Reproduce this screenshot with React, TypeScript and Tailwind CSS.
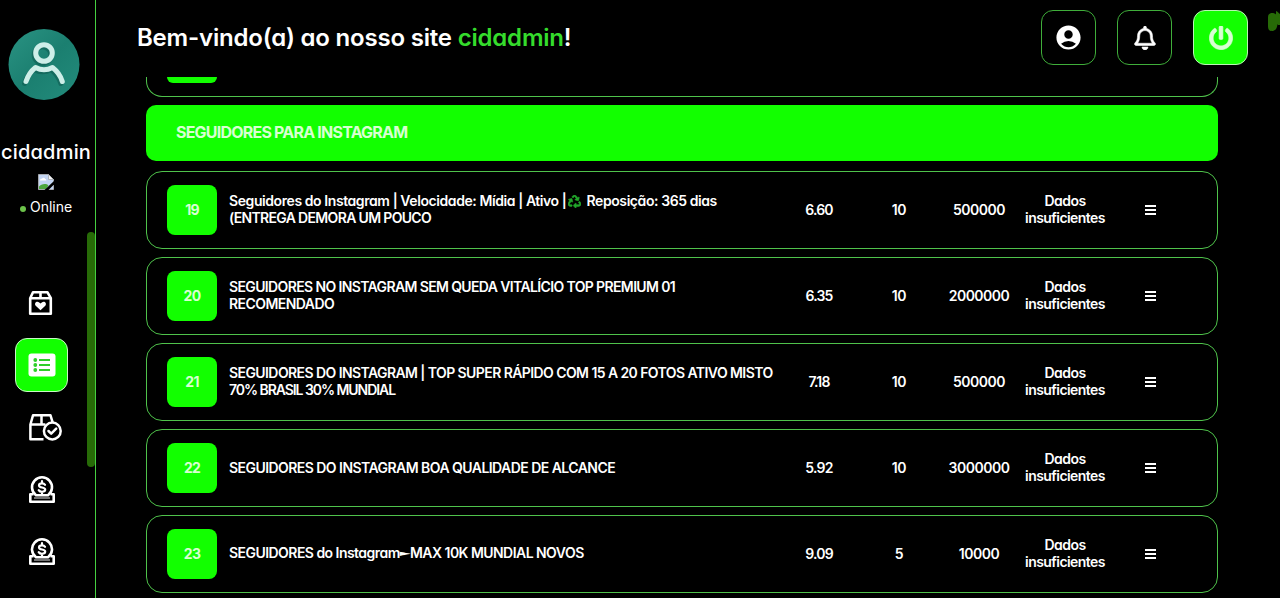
import React from 'react';
import { FaPowerOff, FaRegBell, FaRecycle } from 'react-icons/fa';
import { MdAccountCircle } from 'react-icons/md';

type Line = { text: string; tracking: string; node?: React.ReactNode };

type Service = {
  id: number;
  lines: Line[];
  price: string;
  min: string;
  max: string;
};

const services: Service[] = [
  {
    id: 19,
    lines: [
      {
        text: 'Seguidores do Instagram',
        tracking: 'tracking-[-0.42px]',
        node: (
          <>
            Seguidores do Instagram | Velocidade: Mídia | Ativo |
            <FaRecycle className="mx-[2px] inline h-[13px] w-[13px] stroke-[#22a52b] stroke-[24px] align-[-2px] text-[#22a52b]" /> Reposição: 365 dias
          </>
        ),
      },
      { text: '(ENTREGA DEMORA UM POUCO', tracking: 'tracking-[-0.67px]' },
    ],
    price: '6.60',
    min: '10',
    max: '500000',
  },
  {
    id: 20,
    lines: [
      { text: 'SEGUIDORES NO INSTAGRAM SEM QUEDA VITALÍCIO TOP PREMIUM 01', tracking: 'tracking-[-0.63px]' },
      { text: 'RECOMENDADO', tracking: 'tracking-[-0.55px]' },
    ],
    price: '6.35',
    min: '10',
    max: '2000000',
  },
  {
    id: 21,
    lines: [
      { text: 'SEGUIDORES DO INSTAGRAM | TOP SUPER RÁPIDO COM 15 A 20 FOTOS ATIVO MISTO', tracking: 'tracking-[-0.58px]' },
      { text: '70% BRASIL 30% MUNDIAL', tracking: 'tracking-[-1.05px]' },
    ],
    price: '7.18',
    min: '10',
    max: '500000',
  },
  {
    id: 22,
    lines: [{ text: 'SEGUIDORES DO INSTAGRAM BOA QUALIDADE DE ALCANCE', tracking: 'tracking-[-0.55px]' }],
    price: '5.92',
    min: '10',
    max: '3000000',
  },
  {
    id: 23,
    lines: [
      {
        text: 'SEGUIDORES do Instagram',
        tracking: 'tracking-[-0.54px]',
        node: (
          <>
            SEGUIDORES do Instagram
            <span className="inline-block scale-y-60 font-['DejaVu_Sans']">►</span>
            MAX 10K MUNDIAL NOVOS
          </>
        ),
      },
    ],
    price: '9.09',
    min: '5',
    max: '10000',
  },
];

const Avatar = () => (
  <svg className="h-[72px] w-[72px]" viewBox="0 0 72 72" fill="none">
    <defs>
      <linearGradient id="avatarBg" x1="0" y1="0" x2="1" y2="1">
        <stop offset="0" stopColor="#2a9383" />
        <stop offset="0.5" stopColor="#1b7f70" />
        <stop offset="1" stopColor="#238c7c" />
      </linearGradient>
    </defs>
    <circle cx="36" cy="36.5" r="35.5" fill="url(#avatarBg)" />
    <g strokeLinecap="round" strokeLinejoin="round">
      <g stroke="#0f5d52" strokeWidth="5" opacity="0.6" transform="translate(-1.5 2)">
        <circle cx="36" cy="25" r="8.3" />
        <path d="M18 53.500c2-6 5-10.500 9.500-14 5.500 3 11.500 3 17 0C49 43 52.500 47.500 54.300 53.500" />
      </g>
      <g stroke="#cdeee8" strokeWidth="5">
        <circle cx="36" cy="25" r="8.300" />
        <path d="M18 53.500c2-6 5-10.500 9.500-14 5.500 3 11.500 3 17 0C49 43 52.500 47.500 54.300 53.500" />
      </g>
    </g>
  </svg>
);

const BrokenImage = () => (
  <svg className="h-4 w-4" viewBox="0 0 16 16">
    <path d="M0.500 0.500h10l5 5v10H0.500z" fill="#c3d5f3" stroke="#a5a8ad" />
    <path d="M10.500 0.500v5h5z" fill="#f5f5f5" stroke="#a5a8ad" strokeWidth="0.800" />
    <path d="M2 6.500c0-1.500 1-2 2-1.800C4.500 3.200 7 3.500 7 5c1 0 1.500.7 1.300 1.500z" fill="#fff" />
    <path d="M1 15v-2.500C3 10 8 9 10.500 11.500L8 15z" fill="#4ca63c" />
    <path d="M6.500 16L16 7v3.500L10.500 16z" fill="#000" />
  </svg>
);

const BoxHeart = () => (
  <svg className="h-6 w-[25px]" viewBox="0 0 25 24" fill="none" stroke="#fff" strokeWidth="2.600" strokeLinejoin="round">
    <path d="M2.200 7.200L5 1.300h14.500l3.300 5.900v15.500H2.200zM2.200 7.200h20.600M12.500 1.300v5.900" />
    <path d="M12.500 19.300l-4.800-4.600c-2-2.500 1-5.300 3.500-3.300l1.300 1.100 1.300-1.100c2.500-2 5.500.8 3.500 3.300z" fill="#fff" stroke="none" />
  </svg>
);

const ListBox = () => (
  <svg className="h-6 w-7" viewBox="0 0 28 24">
    <rect x="0.500" y="0.500" width="27" height="23" rx="3" fill="#fff" />
    <g fill="#2fce2a">
      <circle cx="7.300" cy="7" r="1.900" />
      <circle cx="7.300" cy="12" r="1.900" />
      <circle cx="7.300" cy="17" r="1.900" />
      <path d="M11 6h11v2H11zM11 11h11v2H11zM11 16h11v2H11z" />
    </g>
  </svg>
);

const BoxCheck = () => (
  <svg className="h-[27px] w-[33px]" viewBox="0 0 33 27" fill="none" stroke="#fff" strokeWidth="2.500" strokeLinejoin="round">
    <path d="M14.500 25.300H1.400V10.500L4 1.300h17.500l2.300 7.500M1.400 10.500h15M12.500 1.300v9.200" />
    <circle cx="23.300" cy="17" r="8.400" />
    <path d="M19.500 17l2.700 2.700 5-5" strokeLinecap="round" />
  </svg>
);

const CoinSlot = () => (
  <svg className="h-[27px] w-[26px]" viewBox="0 0 26 27" fill="none" stroke="#fff" strokeWidth="2.600" strokeLinejoin="round">
    <path d="M4.500 18.200H1.300v7.500h23.400v-7.500h-3.200" />
    <path d="M5 22h16" stroke="#999" strokeWidth="1.500" />
    <path d="M7 19.300a10 10 0 1 1 12 0z" />
    <path d="M16 8.800c-.6-1-1.700-1.500-3-1.500-1.800 0-3 .8-3 2.100 0 3 6.200 1.200 6.200 4.200 0 1.400-1.300 2.200-3.200 2.200-1.500 0-2.700-.6-3.300-1.700M13 5.200v2M13 15.800v2" strokeWidth="2.200" strokeLinecap="round" />
  </svg>
);

const Sidebar = () => (
  <aside className="flex h-full w-24 shrink-0">
    <div className="flex w-[87px] shrink-0 flex-col">
      <div className="mt-7 flex h-[73px] pl-2">
        <Avatar />
      </div>
      <div className="mt-[37px] h-7 whitespace-nowrap pl-px text-[20px] font-medium leading-7 tracking-[0.2px]">cidadmin</div>
      <div className="mt-2 flex h-[17px] pl-[38px]">
        <BrokenImage />
      </div>
      <div className="mt-1.5 flex h-5 items-center pl-5 text-[14px] leading-5">
        <span className="mr-1 mt-1 h-1.5 w-1.5 shrink-0 rounded-full bg-[#6cc24a]"></span>
        <span>Online</span>
      </div>
      {/* Menu */}
      <nav className="mt-[59px] flex flex-col gap-2 pl-[15px]">
        <a className="flex h-[54px] w-[53px] items-center pl-[13px]"><BoxHeart /></a>
        <a className="flex h-[54px] w-[53px] items-center justify-center rounded-xl border border-[#c9f7c6] bg-[#12ff00]">
          <ListBox />
        </a>
        <a className="flex h-[54px] w-[53px] items-center pl-[14px]"><BoxCheck /></a>
        <a className="flex h-[54px] w-[53px] items-center pl-[14px]"><CoinSlot /></a>
        <a className="flex h-[54px] w-[53px] items-center pl-[14px]"><CoinSlot /></a>
      </nav>
    </div>
    {/* Scroll thumb */}
    <div className="mt-[232px] h-[235px] w-2 shrink-0 rounded-full bg-[#276b07]"></div>
    <div className="w-px shrink-0 bg-[#45d040]"></div>
  </aside>
);

const ServiceRow = ({ service }: { service: Service }) => (
  <div className="grid h-[78px] shrink-0 grid-cols-[62px_550px_80px_80px_80px_92px_80px] items-center rounded-2xl border border-[#4fc24b] pl-5 text-center text-[14px] font-semibold leading-[17px]">
    <div className="flex h-[50px] w-[50px] items-center justify-center rounded-lg bg-[#12ff00] pb-0.5 font-bold tracking-[-0.7px] text-[#d8ffd2]">
      {service.id}
    </div>
    <div className="pb-0.5 text-left">
      {service.lines.map((line) => (
        <div key={line.text} className={`whitespace-nowrap ${line.tracking}`}>{line.node ?? line.text}</div>
      ))}
    </div>
    <div className="pb-0.5 tracking-[-0.8px]">{service.price}</div>
    <div className="pb-0.5 tracking-[-0.4px]">{service.min}</div>
    <div className="pb-0.5 tracking-[-0.5px]">{service.max}</div>
    <div className="pb-0.5 tracking-[-0.55px]">Dados<br />insuficientes</div>
    <div className="flex flex-col items-center gap-0.5 pr-px">
      <span className="h-0.5 w-[11px] bg-white"></span>
      <span className="h-0.5 w-[11px] bg-white"></span>
      <span className="h-0.5 w-[11px] bg-white"></span>
    </div>
  </div>
);

const Header = () => (
  <header className="flex h-[77px] shrink-0 items-start pl-[41px]">
    <h1 className="mt-[22px] grow whitespace-nowrap text-[24px] font-semibold leading-8 tracking-[-0.2px]">
      Bem-vindo(a) ao nosso site <span className="text-[#35dc2c]">cidadmin</span>!
    </h1>
    <div className="mt-2.5 flex gap-[21px]">
      <button className="flex h-[55px] w-[55px] items-center justify-center rounded-xl border border-[#3fae3a]">
        <MdAccountCircle className="h-[29px] w-[29px]" />
      </button>
      <button className="flex h-[55px] w-[55px] items-center justify-center rounded-xl border border-[#3fae3a]">
        <FaRegBell className="h-6 w-6 stroke-white stroke-[12px]" />
      </button>
      <button className="flex h-[55px] w-[55px] items-center justify-center rounded-xl border border-[#b9f5b4] bg-[#12ff00] text-[#d8ffd2]">
        <FaPowerOff className="h-6 w-6 stroke-[#d8ffd2] stroke-[14px]" />
      </button>
    </div>
    <svg className="ml-5 mt-[11px] h-5 w-3" viewBox="0 0 12 20">
      <path d="M0 6c0-3 2-4 4-4 2 0 3 .5 4 1.500V0c1.500.5 2.500 2 4 3v11c-1 0-2 .5-2.500-1C9 18 7 20 4 20c-3 0-4-2-4-5z" fill="#276b07" />
    </svg>
  </header>
);

const App = () => {
  return (
    <div className="flex h-[598px] w-[1280px] overflow-hidden bg-black font-[Inter,sans-serif] text-white [font-feature-settings:'cv11']">
      <Sidebar />
      <main className="flex min-w-0 grow flex-col">
        <Header />
        <section className="flex min-h-0 w-[1122px] grow flex-col overflow-hidden pl-[50px]">
          {/* Tail of the previous row, scrolled under the header */}
          <div className="h-5 shrink-0 rounded-b-2xl border border-t-0 border-[#4fc24b] pl-5">
            <div className="h-1.5 w-[50px] rounded-b-lg bg-[#12ff00]"></div>
          </div>
          <div className="mt-2 flex h-14 shrink-0 items-center rounded-[10px] bg-[#12ff00] pl-[30px] text-[16px] font-bold text-[#d8ffd2]">
            <span className="pb-0.5 tracking-[-0.79px]">SEGUIDORES PARA INSTAGRAM</span>
          </div>
          <div className="mt-2.5 flex flex-col gap-2">
            {services.map((service) => (
              <ServiceRow key={service.id} service={service} />
            ))}
          </div>
        </section>
      </main>
    </div>
  );
};

export default App;
